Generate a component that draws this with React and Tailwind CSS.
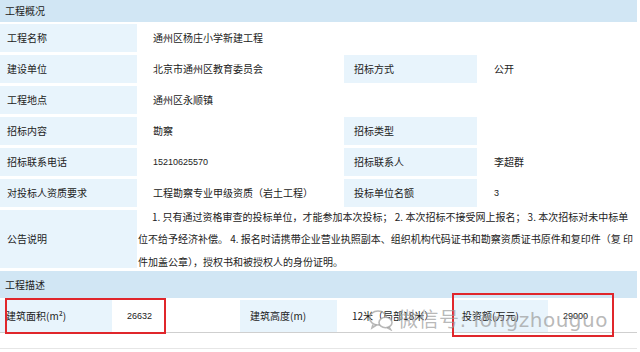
import React from 'react';

const label = 'bg-[#e8f4fc] flex items-center';
const num = 'font-["Liberation_Sans"] text-[9px]';

function Row({ left, value, right, rightValue, numeric }) {
  return (
    <div className="grid grid-cols-[137px_207px_133px_1fr] h-[28px] mt-[3px]">
      <div className={`${label} pl-[7px]`}>{left}</div>
      <div className={`flex items-center pl-[16px] ${numeric ? num : ''}`}>{value}</div>
      <div className={right ? `${label} pl-[10px]` : 'flex items-center'}>{right}</div>
      <div className={`flex items-center pl-[17px] ${rightValue === '3' ? num : ''}`}>{rightValue}</div>
    </div>
  );
}

export default function App() {
  return (
    <div className="relative w-[640px] h-[352px] bg-white overflow-hidden text-[10px] text-[#222] font-['Noto_Sans_CJK_SC',sans-serif] leading-none">
      <div className="w-[637px]">
        <div className="h-[22px] bg-[#d1e6f4] flex items-center pl-[5px]">工程概况</div>
        <div className="mt-[-1px]">
          <Row left="工程名称" value="通州区杨庄小学新建工程" />
          <Row left="建设单位" value="北京市通州区教育委员会" right="招标方式" rightValue="公开" />
          <Row left="工程地点" value="通州区永顺镇" />
          <Row left="招标内容" value="勘察" right="招标类型" />
          <Row left="招标联系电话" value="15210625570" numeric right="招标联系人" rightValue="李超群" />
          <Row left="对投标人资质要求" value="工程勘察专业甲级资质（岩土工程）" right="投标单位名额" rightValue="3" />
        </div>
        <div className="grid grid-cols-[137px_1fr] h-[58px] mt-[3px]">
          <div className={`${label} pl-[7px]`}>公告说明</div>
          <div className="flex flex-col justify-center gap-[12.5px] pl-[1px] whitespace-nowrap">
            <div className="pl-[14px]">1. 只有通过资格审查的投标单位，才能参加本次投标； 2. 本次招标不接受网上报名； 3. 本次招标对未中标单</div>
            <div>位不给予经济补偿。 4. 报名时请携带企业营业执照副本、组织机构代码证书和勘察资质证书原件和复印件（复 印</div>
            <div>件加盖公章），授权书和被授权人的身份证明。</div>
          </div>
        </div>
        <div className="h-[27px] mt-[3px] bg-[#d1e6f4] flex items-center pl-[5px]">工程描述</div>
        <div className="grid grid-cols-[112px_128px_97px_116px_95px_1fr] h-[33px] mt-[2px] border-b border-[#cfcfcf]">
          <div className={`${label} pl-[6px]`}>建筑面积(m²)</div>
          <div className={`flex items-center pl-[15px] ${num}`}>26632</div>
          <div className={`${label} pl-[10px]`}>建筑高度(m)</div>
          <div className="flex items-center pl-[15px]">12米（局部18米）</div>
          <div className={`${label} pl-[9px]`}>投资额(万元)</div>
          <div className={`flex items-center pl-[15px] ${num}`}>29000</div>
        </div>
        <div className="h-[16px] border-b border-[#e6e6e6]" />
      </div>

      <div className="absolute left-[5px] top-[298px] w-[161px] h-[36px] border-2 border-[#e0262b]" />
      <div className="absolute left-[452px] top-[293px] w-[162px] h-[44px] border-2 border-[#e0262b]" />

      <div className="absolute left-[368px] top-[309px] flex items-center gap-[4px] text-[#9a9a9a]/70 pointer-events-none">
        <svg width="26" height="22" viewBox="0 0 26 22" fill="none" stroke="currentColor" strokeWidth="1.6">
          <ellipse cx="10" cy="9" rx="8.5" ry="7" />
          <path d="M5 15.5 L4 19 L8.5 16" />
          <ellipse cx="17.5" cy="13.5" rx="6.5" ry="5.2" fill="white" />
          <path d="M21 18 L22.5 20.5 L19 18.6" />
        </svg>
        <span className="text-[20px] font-['DejaVu_Sans','Noto_Sans_CJK_SC',sans-serif] tracking-[0.5px]">微信号: longzhouguo</span>
      </div>
    </div>
  );
}
